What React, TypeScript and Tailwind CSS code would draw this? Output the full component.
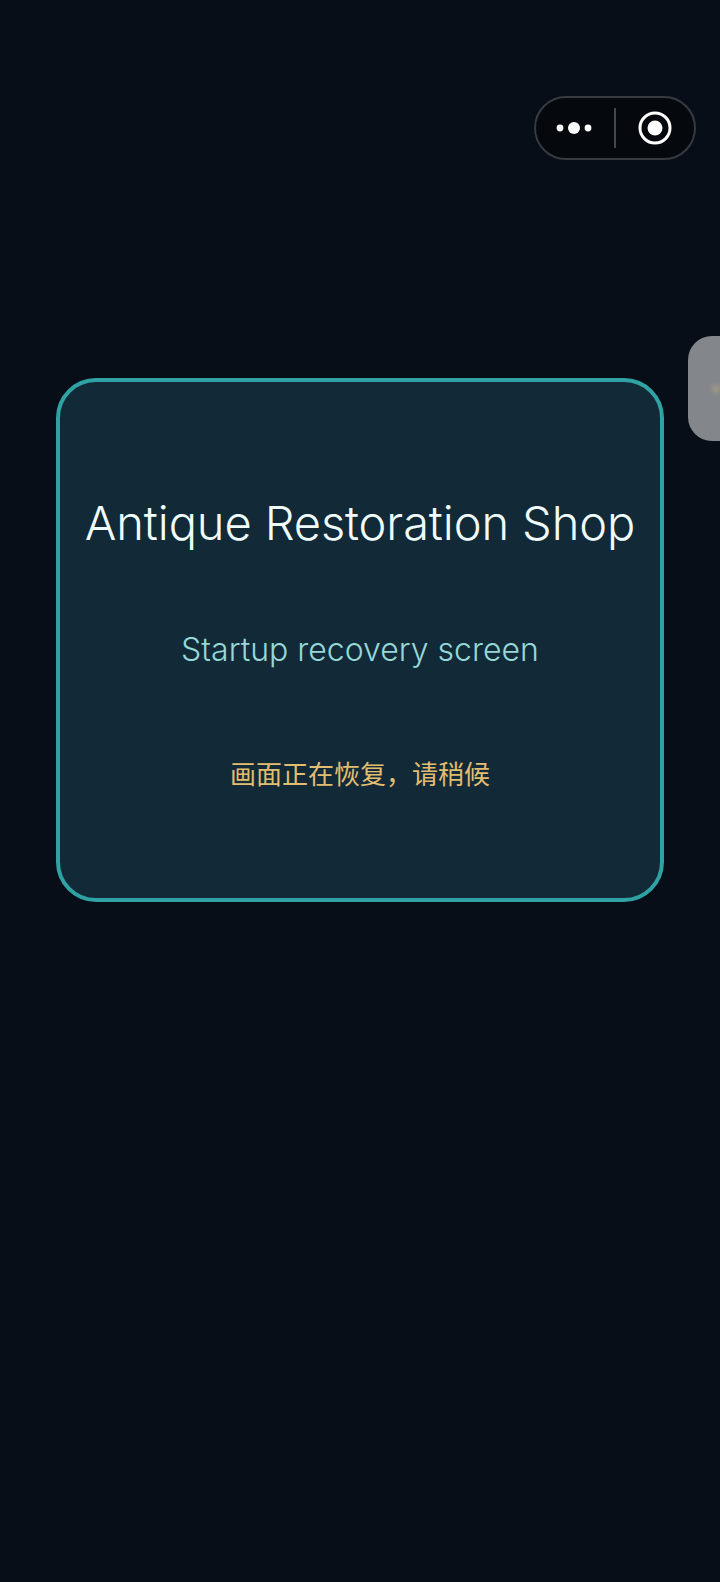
const SANS = "font-['Inter','Noto_Sans_CJK_SC',sans-serif]";

function CapsuleMenu() {
  return (
    <div className="absolute left-[534px] top-[96px] flex h-[64px] w-[162px] items-center rounded-full border-2 border-[#363b42] bg-[#05080c]">
      <div className="flex w-[78px] items-center justify-center pr-[2px]">
        <svg width="36" height="14" viewBox="0 0 36 14" fill="#ffffff">
          <circle cx="4" cy="7" r="3.4" />
          <circle cx="18" cy="7" r="6" />
          <circle cx="32" cy="7" r="3.4" />
        </svg>
      </div>
      <div className="h-[40px] w-[2px] bg-[#44484e]" />
      <div className="flex flex-1 items-center justify-center">
        <svg width="34" height="34" viewBox="0 0 34 34" fill="none">
          <circle cx="17" cy="17" r="15" stroke="#ffffff" strokeWidth="3" />
          <circle cx="17" cy="17" r="7.5" fill="#ffffff" />
        </svg>
      </div>
    </div>
  );
}

export default function App() {
  return (
    <div className={`relative h-[1582px] w-[720px] overflow-hidden bg-[#070e17] pt-[378px] ${SANS}`}>
      <CapsuleMenu />
      <div className="absolute left-[688px] top-[336px] flex h-[105px] w-[70px] items-center rounded-[24px] bg-[#83878c]">
        <div className="ml-[24px] h-[8px] w-[8px] rounded-full bg-[#a39a86] blur-[2px]" />
      </div>
      <div className="mx-auto flex h-[524px] w-[608px] flex-col items-center rounded-[40px] border-4 border-[#2fa3a3] bg-[#122a37]">
        <h1 className="mt-[111px] text-[47px] leading-[60px] font-[350] tracking-[-0.1px] whitespace-nowrap text-[#f0fbfb]">
          Antique Restoration Shop
        </h1>
        <p className="mt-[75px] text-[32px] leading-[44px] font-light text-[#96d8d8]">Startup recovery screen</p>
        <p className="mt-[85px] text-[26px] leading-[36px] text-[#e2bd70]">画面正在恢复，请稍候</p>
      </div>
    </div>
  );
}
